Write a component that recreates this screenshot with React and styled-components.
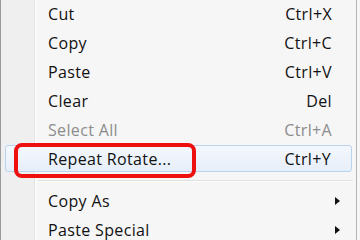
import React from 'react';
import styled, { createGlobalStyle } from 'styled-components';

const GlobalStyle = createGlobalStyle`
	html, body {
		margin: 0;
		padding: 0;
		width: 360px;
		height: 240px;
		overflow: hidden;
		background: #f6f6f6;
	}
	body {
		font-family: 'Open Sans', 'Noto Sans', 'DejaVu Sans', sans-serif;
	}
`;

const items = [
	{ label: 'Cut', shortcut: 'Ctrl+X' },
	{ label: 'Copy', shortcut: 'Ctrl+C' },
	{ label: 'Paste', shortcut: 'Ctrl+V' },
	{ label: 'Clear', shortcut: 'Del' },
	{ label: 'Select All', shortcut: 'Ctrl+A', disabled: true },
	{ label: 'Repeat Rotate...', shortcut: 'Ctrl+Y', hover: true, marked: true },
	{ separator: true },
	{ label: 'Copy As', submenu: true },
	{ label: 'Paste Special', submenu: true },
];

const App = () => {
	return (
		<>
			<GlobalStyle />
			<Menu>
				{items.map((item, i) =>
					item.separator ? (
						<Separator key={i} />
					) : (
						<Row key={i} $hover={item.hover}>
							<Label $disabled={item.disabled}>{item.label}</Label>
							{item.shortcut && (
								<Shortcut $disabled={item.disabled}>{item.shortcut}</Shortcut>
							)}
							{item.submenu && <Arrow />}
							{item.marked && <Marker />}
						</Row>
					)
				)}
			</Menu>
		</>
	);
};

const Menu = styled.div`
	position: relative;
	width: 357px;
	height: 250px;
	margin-top: -1px;
	box-sizing: border-box;
	border-left: 1px solid #9a9a9a;
	border-right: 1px solid #b4b4b4;
	padding: 0 3px 0 3px;
	background: linear-gradient(
		to right,
		#efefef 0,
		#efefef 33px,
		#e2e2e2 33px,
		#e2e2e2 34px,
		#ffffff 34px,
		#ffffff 35px,
		#f6f6f6 35px
	);
`;

const Row = styled.div`
	position: relative;
	display: flex;
	align-items: center;
	height: 29px;
	box-sizing: border-box;
	padding: 0 21px 0 43px;
	margin: 0 0 0 1px;
	font-size: 16px;
	letter-spacing: 0.35px;
	${(p) =>
		p.$hover &&
		`
		height: 27px;
		margin: 1px 1px 1px 1px;
		padding-left: 42px;
		padding-right: 20px;
		border: 1px solid #bcd3ee;
		border-radius: 3px;
		background: linear-gradient(to bottom, #f4f8fd, #e6eef9);
	`}
`;

const Label = styled.span`
	flex: 1;
	color: ${(p) => (p.$disabled ? '#8c8c8c' : '#111111')};
	white-space: nowrap;
`;

const Shortcut = styled.span`
	color: ${(p) => (p.$disabled ? '#8c8c8c' : '#111111')};
	white-space: nowrap;
`;

const Arrow = styled.span`
	width: 0;
	height: 0;
	margin-right: -8px;
	border-top: 4px solid transparent;
	border-bottom: 4px solid transparent;
	border-left: 5px solid #111;
`;

const Marker = styled.div`
	position: absolute;
	left: 8px;
	top: -3px;
	width: 182px;
	height: 35px;
	box-sizing: border-box;
	border: 4px solid #ee0f0f;
	border-radius: 8px;
	pointer-events: none;
`;

const Separator = styled.div`
	height: 13px;
	margin-left: 34px;
	position: relative;
	&::before {
		content: '';
		position: absolute;
		left: 0;
		right: 0;
		top: 7px;
		border-top: 1px solid #e0e0e0;
		border-bottom: 1px solid #ffffff;
	}
`;

export default App;
